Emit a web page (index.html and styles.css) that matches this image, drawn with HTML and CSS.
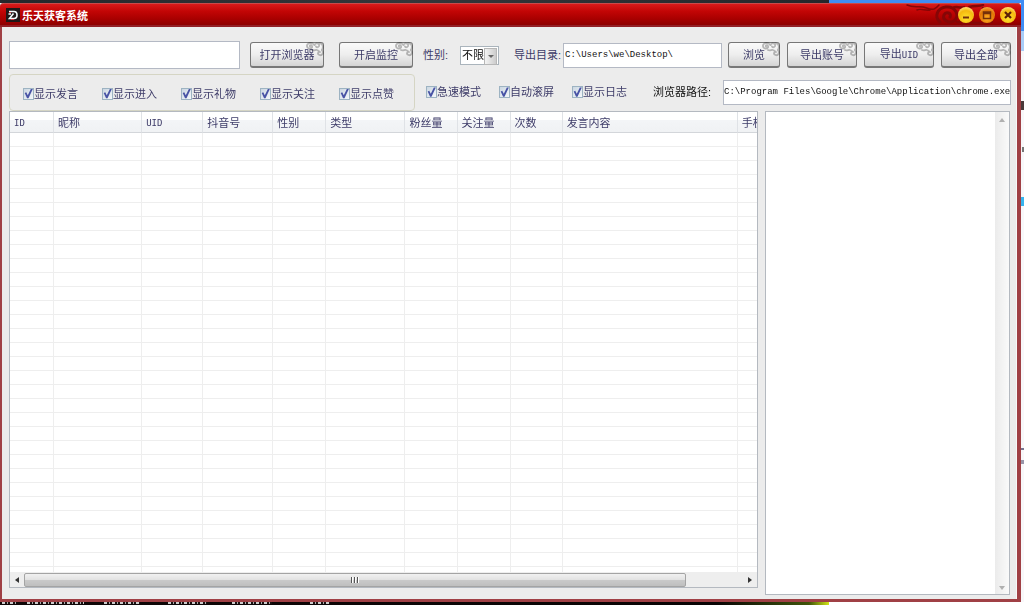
FILE: index.html
```html
<!DOCTYPE html>
<html lang="zh-CN">
<head>
<meta charset="utf-8">
<title>乐天获客系统</title>
<link rel="stylesheet" href="styles.css">
</head>
<body>
<svg class="defs" aria-hidden="true">
  <symbol id="cloud" viewBox="0 0 18 16">
    <g fill="none" stroke="#bdbdbd" stroke-width="1.8" stroke-linecap="round">
      <path d="M4 4.500C3 3.500 5 2.500 6 4C7 6.500 3 7.500 1.500 5.500C0 3 2 1 4.500 1C7 1 7.500 2 8.500 3"/>
      <path d="M8.500 3C9 1 12 .8 13 2.500C13.800 5 11 6 10 4.500M13 1.500C17 1 17.500 5 16 8"/>
      <path d="M6 8C8 9 9.500 7.500 11 8C13 8.500 12.500 10 13.500 9.500M16 8C18 11 16 14 13.500 13C11 12 12 9.500 14 10"/>
    </g>
  </symbol>
</svg>
<main class="window">
  <header class="titlebar">
    <svg class="logo" viewBox="0 0 14 14" aria-hidden="true">
      <rect width="14" height="14" fill="#201818"/>
      <path d="M3 3.500H8C12 3.500 12 10.500 8 10.500H3.500L7.500 5.500M2.500 6H5" fill="none" stroke="#f5ffff" stroke-width="1.600"/>
      <path d="M3 4.500H5M5 11.500H8" stroke="#e04048"/>
    </svg>
    <h1 class="title">乐天获客系统</h1>
    <svg class="ornament" viewBox="0 0 92 22" aria-hidden="true">
      <g fill="none" stroke="#850606" stroke-linecap="round">
        <path d="M6 1C12 4 17 2 22 3S28 6 33 5C36 4 37 2 38 1M16 6C20 4 24 7 29 6" stroke-width="1.500"/>
        <path d="M39 18C33 13 36 4 45 3C55 2 59 12 53 17C48 20 41 16 43 11C45 7 51 9 49 13" stroke-width="3"/>
        <path d="M52 4C55 1 59 5 63 3M56 18C60 20 61 14 66 15M68 3C74 1 78 3 82 1M61 20C70 17 80 21 91 18M82 4C84 5 89 4 91 6" stroke-width="2.500"/>
      </g>
    </svg>
    <div class="controls">
      <button class="orb" aria-label="最小化"><svg viewBox="0 0 16 16"><path d="M5 10.500H11" stroke="#74300a" stroke-width="2"/></svg></button>
      <button class="orb orb-deep" aria-label="最大化"><svg viewBox="0 0 16 16"><path d="M4.500 5H11.500V11.500H4.500Z M4.500 6.500H11.500" fill="none" stroke="#74300a" stroke-width="1.500"/></svg></button>
      <button class="orb" aria-label="关闭"><svg viewBox="0 0 16 16"><path d="M5 5L11 11M11 5L5 11" stroke="#5b2008" stroke-width="2.200"/></svg></button>
    </div>
  </header>
  <div class="client">
    <div class="toolbar">
      <input class="field address" type="text" aria-label="直播间地址" autofocus>
      <button class="btn">打开浏览器<svg class="cloud"><use href="#cloud"/></svg></button>
      <button class="btn monitor">开启监控<svg class="cloud"><use href="#cloud"/></svg></button>
      <label class="gender-label" for="gender">性别:</label>
      <span class="select-box"><select id="gender"><option>不限</option></select></span>
      <label class="dir-label" for="dir">导出目录:</label>
      <input class="field dir" id="dir" type="text" value="C:\Users\we\Desktop\">
      <div class="actions">
        <button class="btn browse">浏览<svg class="cloud"><use href="#cloud"/></svg></button>
        <button class="btn export">导出账号<svg class="cloud"><use href="#cloud"/></svg></button>
        <button class="btn export">导出<span class="latin">UID</span><svg class="cloud"><use href="#cloud"/></svg></button>
        <button class="btn export">导出全部<svg class="cloud"><use href="#cloud"/></svg></button>
      </div>
    </div>
    <div class="options">
      <fieldset class="filters">
        <label class="check"><input type="checkbox" checked>显示发言</label>
        <label class="check"><input type="checkbox" checked>显示进入</label>
        <label class="check"><input type="checkbox" checked>显示礼物</label>
        <label class="check"><input type="checkbox" checked>显示关注</label>
        <label class="check"><input type="checkbox" checked>显示点赞</label>
      </fieldset>
      <div class="modes">
        <label class="check"><input type="checkbox" checked>急速模式</label>
        <label class="check"><input type="checkbox" checked>自动滚屏</label>
        <label class="check"><input type="checkbox" checked>显示日志</label>
      </div>
      <label class="path-label" for="path">浏览器路径:</label>
      <input class="field path" id="path" type="text" value="C:\Program Files\Google\Chrome\Application\chrome.exe">
    </div>
    <div class="panes">
      <section class="list">
        <div class="list-view">
          <table class="records">
            <colgroup>
              <col class="w44"><col class="w88"><col class="w61"><col class="w70"><col class="w53"><col class="w79">
              <col class="w52"><col class="w53"><col class="w52"><col class="w175"><col class="w79">
            </colgroup>
            <thead>
              <tr><th class="latin">ID</th><th>昵称</th><th class="latin">UID</th><th>抖音号</th><th>性别</th><th>类型</th><th>粉丝量</th><th>关注量</th><th>次数</th><th>发言内容</th><th>手机</th></tr>
            </thead>
            <tbody id="rows"></tbody>
          </table>
        </div>
        <div class="hscroll">
          <span class="arrow left"></span>
          <span class="thumb"><i></i><i></i><i></i></span>
          <span class="arrow right"></span>
        </div>
      </section>
      <section class="log">
        <textarea class="log-text" aria-label="日志" readonly></textarea>
        <div class="vscroll"><span class="arrow up"></span><span class="arrow down"></span></div>
      </section>
    </div>
  </div>
</main>
<script src="app.js"></script>
</body>
</html>
```
FILE: app.js
```js
const body = document.getElementById('rows');
for (let r = 0; r < 32; r++) {
  const row = body.insertRow();
  for (let c = 0; c < 11; c++) row.insertCell();
}
```
FILE: styles.css
```css
* { box-sizing: border-box; }
body {
  margin: 0;
  height: 100vh;
  padding: 3px 3px 3px 0;
  overflow: hidden;
  display: flex;
  color: #3d3b68;
  font: 11px/14px "Liberation Sans", "Noto Sans CJK SC", sans-serif;
  background:
    linear-gradient(#3f8df5, #3f8df5) right 0 top 0 / 3px 31px no-repeat,
    linear-gradient(#a9cdf8, #a9cdf8) right 0 top 31px / 3px 20px no-repeat,
    linear-gradient(#4a3a3a, #4a3a3a) right 0 top 101px / 3px 9px no-repeat,
    linear-gradient(#777, #777) right 0 top 147px / 2px 5px no-repeat,
    linear-gradient(#36b4ee, #36b4ee) right 0 top 197px / 3px 9px no-repeat,
    linear-gradient(#77738f, #77738f) right 0 top 448px / 3px 2px no-repeat,
    linear-gradient(#9996aa, #9996aa) right 0 top 460px / 3px 4px no-repeat,
    linear-gradient(90deg, #25272b 0, #34363a 40%, #25272b 81%, #3f8df5 81%) 0 0 / 100% 3px no-repeat,
    repeating-linear-gradient(90deg, #ccc 0 3px, #1a1010 3px 5px, #aaa 5px 6px, #1a1010 6px 8px) 2px 602px / 14px 2px no-repeat,
    repeating-linear-gradient(90deg, #ccc 0 3px, #1a1010 3px 5px, #aaa 5px 6px, #1a1010 6px 8px) 27px 602px / 57px 2px no-repeat,
    repeating-linear-gradient(90deg, #ccc 0 3px, #1a1010 3px 5px, #aaa 5px 6px, #1a1010 6px 8px) 104px 602px / 36px 2px no-repeat,
    repeating-linear-gradient(90deg, #ccc 0 3px, #1a1010 3px 5px, #aaa 5px 6px, #1a1010 6px 8px) 168px 602px / 39px 2px no-repeat,
    repeating-linear-gradient(90deg, #ccc 0 3px, #1a1010 3px 5px, #aaa 5px 6px, #1a1010 6px 8px) 232px 602px / 40px 2px no-repeat,
    repeating-linear-gradient(90deg, #ccc 0 3px, #1a1010 3px 5px, #aaa 5px 6px, #1a1010 6px 8px) 310px 602px / 20px 2px no-repeat,
    linear-gradient(90deg, #100808 0, #080404 70%, #31430a 77%, #405408 79%, #d3e815 81%, #fff 81%) 0 100% / 100% 3px no-repeat,
    #f8f8fa;
}
button, input, select, textarea { font: inherit; color: inherit; margin: 0; }
.defs { position: absolute; width: 0; height: 0; }
.latin { font-family: "DejaVu Sans Mono", monospace; font-size: 9px; }

.window {
  flex: 1;
  min-width: 0;
  display: flex;
  flex-direction: column;
  border: solid #a04045;
  border-width: 0 4px 3px 2px;
  border-radius: 4px 4px 0 0;
  background: #ececec;
  box-shadow: inset -1px 0 #f8f8f8;
}
.titlebar {
  display: flex;
  align-items: center;
  height: 24px;
  margin: 0 -4px 0 -2px;
  padding: 0 5px 0 6px;
  border-radius: 4px 4px 0 0;
  border-top: 1px solid #c94a4a;
  border-bottom: 2px solid #922026;
  background: linear-gradient(#d81b1b, #c20505 35%, #a90000 70%, #8d0000);
}
.logo { width: 14px; height: 14px; }
.title { margin: 2px 0 0 2px; color: #fff; font-size: 11px; line-height: 14px; font-weight: bold; }
.ornament { width: 92px; height: 22px; margin: 0 -35px 0 auto; }
.controls { display: flex; gap: 5px; z-index: 1; }
.orb {
  width: 16px;
  height: 16px;
  padding: 0;
  border: 0;
  border-radius: 50%;
  background: radial-gradient(circle at 50% 70%, #ffe22d, #f5b90f 55%, #ffdf72 80%, #a95b16);
}
.orb-deep { background: radial-gradient(circle at 50% 70%, #ffae22, #e27505 55%, #f5a73b 80%, #913807); }
.orb svg { display: block; width: 16px; height: 16px; }

.client { flex: 1; min-height: 0; display: flex; flex-direction: column; padding: 14px 6px 4px 7px; }
.toolbar { display: flex; align-items: center; height: 28px; }
.field {
  min-width: 0;
  padding: 0 0 0 1px;
  border: 1px solid #b4b9c4;
  background: #fff;
  color: #111;
  font-family: "Liberation Mono", monospace;
  font-size: 9px;
  outline: 0;
}
.address { width: 231px; height: 28px; margin-right: 10px; }
.btn {
  position: relative;
  width: 74px;
  height: 26px;
  padding: 0;
  border: 1px solid #777;
  border-bottom-width: 2px;
  border-radius: 3px;
  background: linear-gradient(#fafafa, #eee 50%, #d4d4d4);
  white-space: nowrap;
}
.cloud { position: absolute; top: -1px; right: -1px; width: 18px; height: 16px; mix-blend-mode: multiply; }
.monitor { margin-left: 15px; }
.gender-label { margin: 0 10px; width: 27px; white-space: nowrap; }
.select-box { position: relative; display: flex; width: 39px; height: 19px; border: 1px solid #aab4bc; background: #fff; }
.select-box select { width: 100%; padding: 0 0 0 1px; border: 0; appearance: none; background: none; color: #111; }
.select-box::before {
  content: "";
  position: absolute;
  right: 1px;
  top: 1px;
  width: 11px;
  height: 15px;
  border: 1px solid #b7b7b7;
  background: linear-gradient(90deg, #f4f4f4, #ccc);
}
.select-box::after {
  content: "";
  position: absolute;
  right: 4px;
  top: 8px;
  border: solid transparent;
  border-width: 3px 3px 0;
  border-top-color: #666;
}
.dir-label { margin-left: 15px; width: 49px; white-space: nowrap; }
.dir { flex: 1; height: 25px; }
.actions { display: flex; gap: 7px; margin-left: 6px; }
.browse { width: 52px; }
.export { width: 70px; }

.options { display: flex; align-items: center; height: 42px; padding-top: 4px; }
.filters {
  display: flex;
  align-items: center;
  gap: 24px;
  width: 406px;
  height: 37px;
  margin: 0;
  padding: 3px 0 0 13px;
  border: 1px solid #d5d5c4;
  border-radius: 4px;
}
.check { display: flex; align-items: center; white-space: nowrap; }
.check input {
  display: grid;
  width: 11px;
  height: 12px;
  border: 1px solid #9db3c2;
  appearance: none;
  background: linear-gradient(135deg, #cbd7e2, #f4f8fa);
}
.check input:checked::before {
  content: "";
  background: #4853a5;
  clip-path: polygon(8% 45%, 25% 38%, 42% 68%, 76% 4%, 98% 4%, 50% 98%, 34% 98%);
}
.modes { display: flex; gap: 18px; margin-left: 11px; }
.path-label { margin-left: 26px; width: 70px; color: #111; white-space: nowrap; }
.path { flex: 1; height: 25px; padding: 0; }

.panes { flex: 1; min-height: 0; display: grid; grid-template-columns: minmax(0, 1fr) 245px; gap: 7px; padding-right: 1px; }
.list { display: flex; flex-direction: column; min-height: 0; margin-bottom: 7px; border: 1px solid #b4b9c0; background: #fff; }
.list-view { flex: 1; min-height: 0; overflow: hidden; }
.records { width: 807px; table-layout: fixed; border-collapse: separate; border-spacing: 0; }
.records th {
  height: 21px;
  padding: 2px 0 0 4px;
  border-right: 1px solid #dfe2e6;
  border-bottom: 1px solid #d3d6da;
  background: linear-gradient(#fff 40%, #f3f5f7 41%, #f0f2f4);
  font-weight: normal;
  text-align: left;
  white-space: nowrap;
}
.records td { height: 14px; padding: 0; border-right: 1px solid #eee; border-bottom: 1px solid #eee; }
.w44 { width: 44px; }
.w52 { width: 52px; }
.w53 { width: 53px; }
.w61 { width: 61px; }
.w70 { width: 70px; }
.w79 { width: 79px; }
.w88 { width: 88px; }
.w175 { width: 175px; }
.hscroll { display: flex; align-items: center; height: 15px; padding: 0 5px; background: #eee; }
.thumb {
  flex: 0 1 662px;
  display: flex;
  align-items: center;
  justify-content: center;
  gap: 1px;
  height: 14px;
  margin-left: 5px;
  border: 1px solid #a4a4a4;
  border-radius: 2px;
  background: linear-gradient(#f1f1f1, #e2e2e2 48%, #cacaca 50%, #bfbfbf);
}
.thumb i { width: 2px; height: 6px; border-left: 1px solid #555; background: #fff; }
.arrow { width: 0; height: 0; border: 3px solid transparent; }
.left { border-left: 0; border-width: 3px 4px 3px 0; border-right-color: #333; }
.right { margin-left: auto; border-width: 3px 0 3px 4px; border-left-color: #333; }
.log { display: flex; border: 1px solid #b4b9c0; background: #fff; }
.log-text { flex: 1; min-width: 0; padding: 2px; border: 0; resize: none; outline: 0; background: #fff; }
.vscroll {
  display: flex;
  flex-direction: column;
  align-items: center;
  justify-content: space-between;
  width: 14px;
  padding: 6px 0 4px;
  background: linear-gradient(90deg, #ebebeb, #fafafa);
}
.up { border-top: 0; border-bottom: 4px solid #b0b0b0; }
.down { border-bottom: 0; border-top: 4px solid #b0b0b0; }
```
